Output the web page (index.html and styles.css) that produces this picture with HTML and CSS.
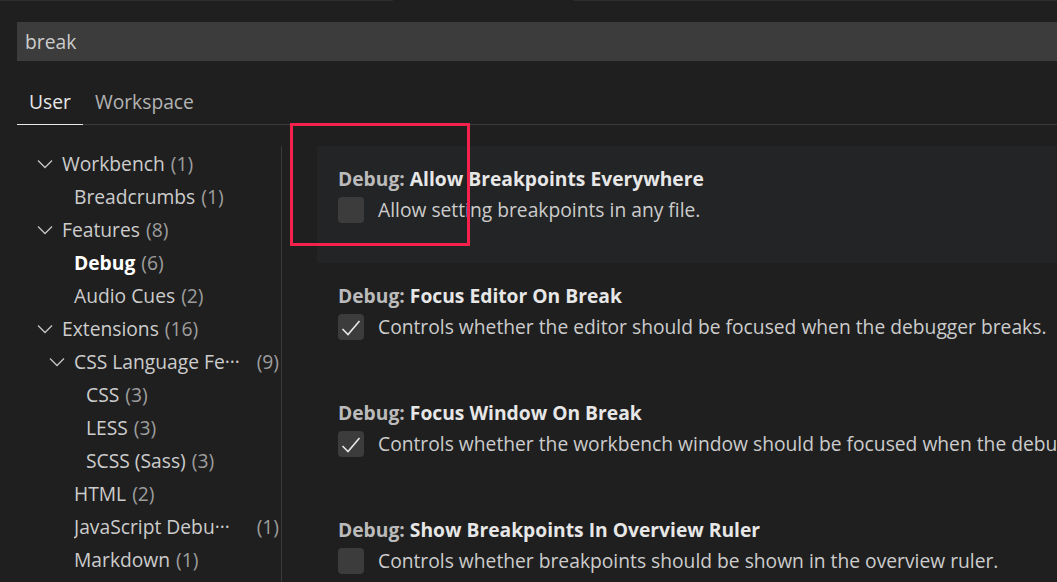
FILE: index.html
```html
<!DOCTYPE html>
<html lang="en">
<head>
<meta charset="utf-8">
<title>Settings</title>
<link rel="stylesheet" href="styles.css">
</head>
<body>
<div class="topline">
  <span class="seg seg-a"></span>
  <span class="gap"></span>
  <span class="seg seg-b"></span>
</div>
<div class="search">break</div>
<div class="tabs">
  <span class="tab active">User</span>
  <span class="tab">Workspace</span>
</div>
<div class="main">
  <nav class="tree">
    <div class="row lvl1"><span class="twistie"><svg viewBox="0 0 16 16" width="16" height="16"><polyline points="1,4.5 8,11.5 15,4.5"/></svg></span><span class="label">Workbench</span><span class="count">(1)</span></div>
    <div class="row lvl2"><span class="twistie"></span><span class="label">Breadcrumbs</span><span class="count">(1)</span></div>
    <div class="row lvl1"><span class="twistie"><svg viewBox="0 0 16 16" width="16" height="16"><polyline points="1,4.5 8,11.5 15,4.5"/></svg></span><span class="label">Features</span><span class="count">(8)</span></div>
    <div class="row lvl2 selected"><span class="twistie"></span><span class="label">Debug</span><span class="count">(6)</span></div>
    <div class="row lvl2"><span class="twistie"></span><span class="label">Audio Cues</span><span class="count">(2)</span></div>
    <div class="row lvl1"><span class="twistie"><svg viewBox="0 0 16 16" width="16" height="16"><polyline points="1,4.5 8,11.5 15,4.5"/></svg></span><span class="label">Extensions</span><span class="count">(16)</span></div>
    <div class="row lvl2 truncated"><span class="twistie"><svg viewBox="0 0 16 16" width="16" height="16"><polyline points="1,4.5 8,11.5 15,4.5"/></svg></span><span class="label">CSS Language Fe···</span><span class="count">(9)</span></div>
    <div class="row lvl3"><span class="twistie"></span><span class="label">CSS</span><span class="count">(3)</span></div>
    <div class="row lvl3"><span class="twistie"></span><span class="label">LESS</span><span class="count">(3)</span></div>
    <div class="row lvl3"><span class="twistie"></span><span class="label">SCSS (Sass)</span><span class="count">(3)</span></div>
    <div class="row lvl2"><span class="twistie"></span><span class="label">HTML</span><span class="count">(2)</span></div>
    <div class="row lvl2 truncated"><span class="twistie"></span><span class="label">JavaScript Debu···</span><span class="count">(1)</span></div>
    <div class="row lvl2"><span class="twistie"></span><span class="label">Markdown</span><span class="count">(1)</span></div>
  </nav>
  <section class="settings">
    <div class="setting focused">
      <div class="title"><span class="cat">Debug: </span><span class="name">Allow Breakpoints Everywhere</span></div>
      <div class="value"><span class="checkbox"></span><span class="desc">Allow setting breakpoints in any file.</span></div>
    </div>
    <div class="setting">
      <div class="title"><span class="cat">Debug: </span><span class="name">Focus Editor On Break</span></div>
      <div class="value"><span class="checkbox checked"><svg viewBox="0 0 26 26" width="26" height="26"><polyline points="4.5,15 10,20.5 21.5,7"/></svg></span><span class="desc">Controls whether the editor should be focused when the debugger breaks.</span></div>
    </div>
    <div class="setting">
      <div class="title"><span class="cat">Debug: </span><span class="name">Focus Window On Break</span></div>
      <div class="value"><span class="checkbox checked"><svg viewBox="0 0 26 26" width="26" height="26"><polyline points="4.5,15 10,20.5 21.5,7"/></svg></span><span class="desc">Controls whether the workbench window should be focused when the debugger breaks.</span></div>
    </div>
    <div class="setting">
      <div class="title"><span class="cat">Debug: </span><span class="name">Show Breakpoints In Overview Ruler</span></div>
      <div class="value"><span class="checkbox"></span><span class="desc">Controls whether breakpoints should be shown in the overview ruler.</span></div>
    </div>
  </section>
</div>
<div class="annotation"></div>
</body>
</html>
```

FILE: styles.css
```css
html, body {
  margin: 0;
  padding: 0;
}
body {
  width: 1057px;
  height: 582px;
  overflow: hidden;
  background: #1f1f1f;
  color: #cccccc;
  font-family: "Open Sans", "Noto Sans", sans-serif;
  font-size: 19.25px;
  position: relative;
  display: flex;
  flex-direction: column;
}
.topline {
  display: flex;
  height: 1px;
  flex: none;
}
.topline .seg {
  background: #2c2c2c;
}
.topline .seg-a { width: 393px; }
.topline .gap { width: 180px; }
.topline .seg-b { flex: 1; }

.search {
  flex: none;
  margin: 21px 0 0 17px;
  height: 39px;
  line-height: 39px;
  padding-left: 8px;
  background: #3c3c3c;
  color: #cccccc;
  white-space: nowrap;
}

.tabs {
  flex: none;
  display: flex;
  margin: 21px 0 0 17px;
  border-bottom: 1px solid #3a3a3a;
}
.tab {
  padding: 0 12px;
  height: 42px;
  line-height: 40px;
  color: #b3b3b3;
}
.tab.active {
  color: #e7e7e7;
  margin-bottom: -1px;
  border-bottom: 1px solid #e7e7e7;
}

.main {
  display: flex;
  padding-top: 21px;
  flex: 1;
  min-height: 0;
  overflow: hidden;
}

.tree {
  width: 281px;
  flex: none;
  border-right: 1px solid #393939;
  overflow: hidden;
  padding-top: 1px;
}
.row {
  display: flex;
  align-items: center;
  height: 33px;
  white-space: nowrap;
  padding-right: 2px;
}
.lvl1 { padding-left: 37px; }
.lvl2 { padding-left: 49px; }
.lvl3 { padding-left: 61px; }
.twistie {
  width: 25px;
  flex: none;
  display: flex;
  align-items: center;
}
.twistie svg {
  display: block;
  fill: none;
  stroke: #c5c5c5;
  stroke-width: 1.3;
}
.label {
  color: #cccccc;
}
.count {
  color: #9d9d9d;
  margin-left: 6px;
}
.selected .label {
  font-weight: 700;
  color: #ffffff;
}
.truncated .label {
  overflow: hidden;
}
.truncated .count {
  margin-left: auto;
}

.settings {
  flex: 1;
  margin-left: 35px;
  min-width: 0;
}
.setting {
  height: 117px;
  box-sizing: border-box;
  padding: 20px 0 0 21px;
  white-space: nowrap;
  overflow: hidden;
}
.setting.focused {
  background: #232425;
}
.title {
  height: 26px;
  line-height: 26px;
  font-weight: 700;
}
.title .cat {
  color: #bbbbbb;
}
.title .name {
  color: #e7e7e7;
}
.value {
  display: flex;
  align-items: center;
  margin-top: 5px;
  height: 26px;
}
.checkbox {
  width: 26px;
  height: 26px;
  flex: none;
  border-radius: 4px;
  background: #3c3c3c;
  margin-right: 14px;
}
.checkbox svg {
  display: block;
  fill: none;
  stroke: #e8e8e8;
  stroke-width: 1.6;
}
.desc {
  color: #cccccc;
  line-height: 26px;
}

.annotation {
  position: absolute;
  left: 290px;
  top: 123px;
  width: 174px;
  height: 117px;
  border: 3px solid #f4214d;
}
```
